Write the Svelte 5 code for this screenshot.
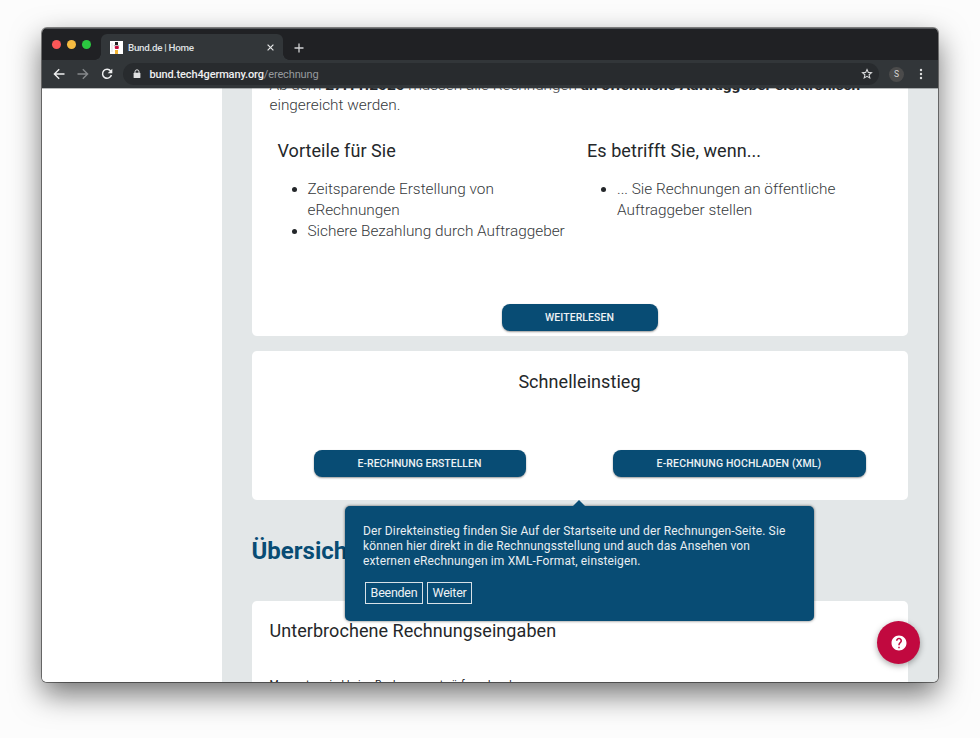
<script>
  const benefits = ['Zeitsparende Erstellung von eRechnungen', 'Sichere Bezahlung durch Auftraggeber'];
  const conditions = ['... Sie Rechnungen an öffentliche Auftraggeber stellen'];
</script>

<main class="stage">
  <div class="window">
    <header class="tabstrip">
      <div class="lights"><i class="red"></i><i class="yellow"></i><i class="green"></i></div>
      <div class="tab">
        <svg class="favicon" width="13" height="13" viewBox="0 0 13 13">
          <rect width="13" height="13" fill="#fff" />
          <rect x="1" y="2" width="2" height="9" fill="#eee" />
          <rect x="5" y="1" width="3" height="3" fill="#222" />
          <rect x="3.8" y="4.2" width="5.4" height="1" fill="#555" opacity=".5" />
          <rect x="4.8" y="5" width="4" height="3" rx="1" fill="#c5093b" />
          <rect x="5" y="9" width="3" height="4" fill="#f1b434" />
        </svg>
        <span class="title">Bund.de | Home</span>
        <svg class="close" width="7" height="7" viewBox="0 0 7 7"><path d="M.6.6l5.8 5.8M6.4.6L.6 6.4" stroke="#e2e3e4" stroke-width="1.2" /></svg>
      </div>
      <svg class="plus" width="10" height="10" viewBox="0 0 10 10"><path d="M5 .5v9M.5 5h9" stroke="#d0d1d3" stroke-width="1.3" /></svg>
    </header>

    <nav class="toolbar">
      <svg class="nav" width="12" height="12" viewBox="0 0 12 12"><path d="M11.5 6H1.5M6.2 1.2L1.4 6l4.8 4.8" fill="none" stroke="#eeeff0" stroke-width="1.4" /></svg>
      <svg class="nav" width="12" height="12" viewBox="0 0 12 12"><path d="M.5 6h10M5.8 1.2L10.6 6l-4.8 4.8" fill="none" stroke="#85888b" stroke-width="1.4" /></svg>
      <svg class="nav reload" width="12" height="12" viewBox="0 0 12 12"><path d="M9.7 3.1A4.5 4.5 0 1 0 10.4 7" fill="none" stroke="#eeeff0" stroke-width="1.5" /><path d="M11.3.7v4.6H6.7z" fill="#eeeff0" /></svg>
      <div class="address">
        <svg class="lock" width="8" height="10" viewBox="0 0 8 10"><path d="M2 4V2.8a2 2 0 0 1 4 0V4" fill="none" stroke="#e0e1e2" stroke-width="1" /><rect x=".6" y="3.7" width="6.8" height="5.4" rx=".7" fill="#e0e1e2" /></svg>
        <span class="url">bund.tech4germany.org<em>/erechnung</em></span>
        <svg class="star" width="12" height="12" viewBox="0 0 12 12"><path d="M6 1.5l1.3 2.9 3.2.3-2.4 2.1.7 3.1L6 8.3 3.2 9.9l.7-3.1-2.4-2.1 3.2-.3z" fill="none" stroke="#d5d6d8" stroke-width="1.1" /></svg>
      </div>
      <span class="avatar">S</span>
      <svg class="dots" width="4" height="12" viewBox="0 0 4 12"><circle cx="2" cy="2" r="1.2" /><circle cx="2" cy="6" r="1.2" /><circle cx="2" cy="10" r="1.2" /></svg>
    </nav>

    <div class="page">
      <aside></aside>
      <div class="content">
        <section class="card intro">
          <p class="lead">Ab dem <b>27.11.2020</b> müssen alle Rechnungen <b>an öffentliche Auftraggeber elektronisch</b><br />eingereicht werden.</p>
          <div class="columns">
            <div>
              <h3>Vorteile für Sie</h3>
              <ul>{#each benefits as item}<li><span>{item}</span></li>{/each}</ul>
            </div>
            <div>
              <h3>Es betrifft Sie, wenn...</h3>
              <ul>{#each conditions as item}<li><span>{item}</span></li>{/each}</ul>
            </div>
          </div>
          <button class="action read">WEITERLESEN</button>
        </section>

        <section class="card quick">
          <h3>Schnelleinstieg</h3>
          <div class="actions">
            <button class="action create">E-RECHNUNG ERSTELLEN</button>
            <button class="action upload">E-RECHNUNG HOCHLADEN (XML)</button>
          </div>
        </section>

        <h2>Übersicht</h2>

        <section class="card pending">
          <h3>Unterbrochene Rechnungseingaben</h3>
          <p>Momentan sind keine Rechnungsentwürfe vorhanden.</p>
        </section>

        <div class="tour" role="dialog" aria-label="Direkteinstieg">
          <p>Der Direkteinstieg finden Sie Auf der Startseite und der Rechnungen-Seite. Sie<br />können hier direkt in die Rechnungsstellung und auch das Ansehen von<br />externen eRechnungen im XML-Format, einsteigen.</p>
          <div class="steps"><button class="end">Beenden</button><button class="next">Weiter</button></div>
        </div>
      </div>
      <button class="help" aria-label="Hilfe">
        <svg width="18" height="18" viewBox="0 0 24 24"><path fill="#fff" d="M12 2C6.48 2 2 6.48 2 12s4.48 10 10 10 10-4.48 10-10S17.52 2 12 2zm1 17h-2v-2h2v2zm2.07-7.75l-.9.92C13.45 12.9 13 13.5 13 15h-2v-.5c0-1.1.45-2.1 1.17-2.83l1.24-1.26c.37-.36.59-.86.59-1.41 0-1.1-.9-2-2-2s-2 .9-2 2H8c0-2.21 1.79-4 4-4s4 1.79 4 4c0 .88-.36 1.68-.93 2.25z" /></svg>
      </button>
    </div>
  </div>
</main>

<style>
  :global(body) { margin: 0; background: #fcfcfc; }
  * { box-sizing: border-box; }
  button { font-family: inherit; margin: 0; padding: 0; }
  h2, h3, p, ul { margin: 0; }
  .stage { width: 980px; height: 738px; padding: 28px 42px 56px; overflow: hidden; font-family: Roboto, "Liberation Sans", sans-serif; color: #24272a; }
  .window { height: 654px; display: flex; flex-direction: column; border-radius: 5px; overflow: hidden; box-shadow: 0 0 0 1px rgba(0,0,0,.45), 0 12px 30px rgba(0,0,0,.56); }

  .tabstrip { height: 32px; flex: none; display: flex; background: #202124; border-top: 1px solid #55575a; }
  .lights { display: flex; gap: 6px; padding: 11px 0 0 10px; width: 59px; }
  .lights i { width: 9px; height: 9px; border-radius: 50%; }
  .red { background: #fb5758; }
  .yellow { background: #f6bb41; }
  .green { background: #2bc840; }
  .tab { position: relative; width: 182px; height: 26px; margin-top: 5px; padding: 1px 9px 0; display: flex; align-items: center; background: #323639; border-radius: 6px 6px 0 0; }
  .tab::before, .tab::after { content: ''; position: absolute; bottom: 0; width: 6px; height: 6px; }
  .tab::before { left: -6px; background: radial-gradient(circle at 0 0, transparent 5.5px, #323639 6px); }
  .tab::after { right: -6px; background: radial-gradient(circle at 100% 0, transparent 5.5px, #323639 6px); }
  .title { margin-left: 5px; flex: 1; font-size: 9.8px; font-weight: 500; color: #dfe0e2; letter-spacing: -.28px; white-space: nowrap; }
  .plus { margin: 14px 0 0 11px; }
  .toolbar { height: 28px; flex: none; display: flex; align-items: center; padding-left: 11px; background: #323639; }
  .nav { margin-right: 12px; }
  .reload { margin-right: 10px; }
  .address { flex: none; width: 756px; height: 22px; border-radius: 11px; background: #282b2e; display: flex; align-items: center; padding: 0 6px 0 10px; }
  .url { margin-left: 8.5px; flex: 1; font-size: 11px; font-weight: 500; letter-spacing: -.13px; color: #eff0f1; }
  .url em { font-style: normal; font-weight: 400; color: #969a9d; }
  .avatar { width: 15px; height: 15px; margin-left: 10px; border-radius: 50%; background: #4b4b4b; color: #d6d6d6; font-size: 8.5px; line-height: 15px; text-align: center; }
  .dots { margin-left: 15px; fill: #dfe0e1; }

  .page { position: relative; flex: 1; min-height: 0; display: flex; overflow: hidden; background: #e3e7e8; }
  .page::before { content: ''; position: absolute; z-index: 1; top: 0; left: 0; right: 0; height: 1px; background: rgba(50,54,57,.35); }
  aside { width: 179.5px; flex: none; background: #fff; }
  .content { position: relative; width: 656px; margin-left: 30px; flex: none; }
  .card { background: #fff; border-radius: 5px; overflow: hidden; }
  h3 { font-weight: 400; font-size: 18px; line-height: 22px; letter-spacing: .06px; }
  .intro { height: 248px; border-radius: 0 0 5px 5px; display: flex; flex-direction: column; }
  .lead { margin: -13px 0 0 18px; font-size: 15.35px; font-weight: 300; line-height: 20px; white-space: nowrap; color: #36393c; }
  .lead b { font-weight: 700; color: #24272a; }
  .columns { display: flex; margin: 25px 0 0 26px; }
  .columns > div { width: 309.5px; flex: none; }
  ul { padding-left: 30px; margin-top: 17px; width: 294px; font-size: 15.35px; font-weight: 300; line-height: 21.2px; }
  li span { color: #36393c; }
  .action { height: 27px; border: 0; border-radius: 8px; background: #084c74; color: #edf2f5; font-size: 10.5px; font-weight: 500; box-shadow: 0 1px 2px rgba(0,0,0,.4); }
  .read { width: 156px; margin: auto 0 5.5px 250px; letter-spacing: .08px; }
  .quick { margin-top: 15px; height: 149px; padding-top: 20px; }
  .quick h3 { text-align: center; }
  .actions { display: flex; justify-content: space-between; margin-top: 57px; padding: 0 42px 0 62px; }
  .create { width: 212px; }
  .upload { width: 253px; letter-spacing: .14px; }
  h2 { margin-top: 36px; color: #084c74; font-size: 24px; font-weight: 700; line-height: 30px; }
  .pending { margin-top: 35px; height: 110px; padding: 19px 18px 0; }
  .pending p { margin-top: 35px; font-size: 10.5px; line-height: 16px; letter-spacing: .13px; }
  .tour { position: absolute; left: 93.5px; top: 418px; width: 469px; height: 115px; padding: 18px 18px; background: #084c74; border-radius: 5px; color: #e8eef2; box-shadow: 0 0 3px rgba(0,0,0,.6); }
  .tour::before { content: ''; position: absolute; left: 228px; top: -6px; border: 6px solid transparent; border-top: 0; border-bottom-color: #084c74; }
  .tour p { font-size: 12px; line-height: 15.2px; letter-spacing: .14px; white-space: nowrap; }
  .steps { display: flex; gap: 4px; margin: 12px 0 0 2px; }
  .steps button { height: 22px; border: 1px solid #d7e1e7; background: transparent; color: #edf2f5; font-size: 12.5px; letter-spacing: -.25px; }
  .end { width: 58px; }
  .next { width: 45px; }
  .help { position: absolute; left: 835px; top: 533px; width: 43px; height: 43px; border: 0; border-radius: 50%; background: #c1093f; display: grid; place-items: center; box-shadow: 0 2px 6px rgba(0,0,0,.35); }
</style>
